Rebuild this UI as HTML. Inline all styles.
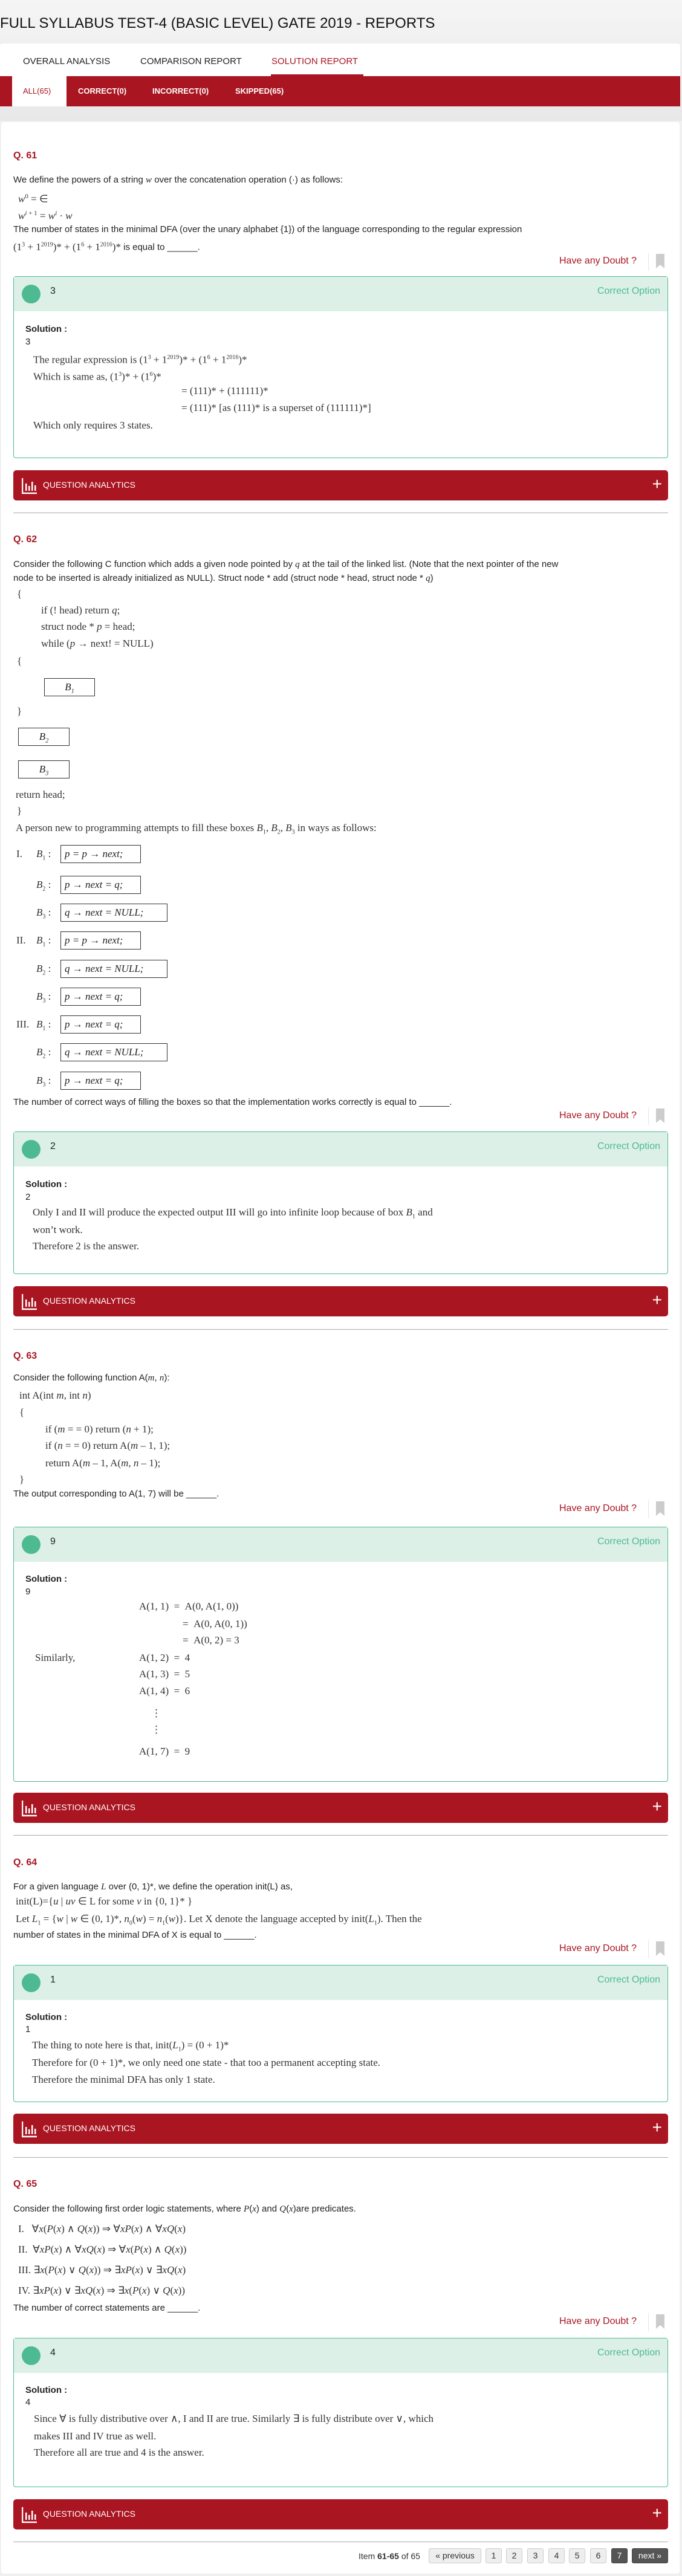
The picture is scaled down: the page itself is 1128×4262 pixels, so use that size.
<!DOCTYPE html>
<html><head><meta charset="utf-8">
<style>
*{margin:0;padding:0;box-sizing:border-box}
body{width:1128px;height:4262px;background:#f0f0f0;font-family:"Liberation Sans",sans-serif;color:#222;position:relative;overflow:hidden}
.a{position:absolute;white-space:nowrap;line-height:20px}
.q{font-size:15px;left:22px}
.m{font-family:"Liberation Serif",serif;font-size:17px;color:#333}
.qn{color:#a91521;font-size:16px;font-weight:bold;left:22px}
.doubt{left:925px;color:#a91521;font-size:16px}
.bm{position:absolute;left:1085px;width:14px;height:24px;background:#ccc;clip-path:polygon(0 0,100% 0,100% 100%,50% 75%,0 100%)}
.vl{position:absolute;left:1072px;width:1px;height:30px;background:#e5e5e5}
.box{position:absolute;left:22px;width:1083px;border:1px solid #4dba92;border-radius:4px;background:#fff}
.box .hd{height:57px;background:#dcf0e8;position:relative}
.box .cir{position:absolute;left:13px;top:13px;width:31px;height:31px;border-radius:50%;background:#4dba92}
.box .num{position:absolute;left:60px;top:15px;font-size:16px}
.box .co{position:absolute;right:12px;top:15px;font-size:16px;color:#4dba92}
.sol{font-size:15px;font-weight:bold;left:42px}
.sv{font-size:15px;left:42px}
.an{position:absolute;left:22px;width:1083px;height:50px;background:#a91521;border-radius:5px;color:#fff}
.an .t{position:absolute;left:49px;top:16px;font-size:14px}
.an .p{position:absolute;right:10px;top:8px;font-size:28px;font-weight:300;line-height:30px}
.an svg{position:absolute;left:14px;top:13px}
.hr{position:absolute;left:22px;width:1083px;height:1px;background:#aaa}
.bx{position:absolute;border:1.5px solid #333;height:30px;font-family:"Liberation Serif",serif;font-size:17px;font-style:italic;padding:3px 6px;line-height:22px}
i{font-family:"Liberation Serif",serif}
.pg{position:absolute;top:4216px;height:25px;border:1px solid #ccc;border-radius:3px;background:#eee;font-size:14px;text-align:center;line-height:23px;color:#333}
</style></head><body>
<div style="position:absolute;left:0;top:0;width:1128px;height:200px;background:linear-gradient(#f5f5f5,#e8e8e8)"></div>
<div class="a" style="left:0;top:24px;font-size:24px;line-height:30px;color:#111">FULL SYLLABUS TEST-4 (BASIC LEVEL) GATE 2019 - REPORTS</div>
<div style="position:absolute;left:0;top:72px;width:1125px;height:54px;background:#fff;border-radius:4px 4px 0 0"></div>
<div class="a" style="left:38px;top:92px;font-size:15px;color:#222">OVERALL ANALYSIS</div>
<div class="a" style="left:232px;top:92px;font-size:15px;color:#222">COMPARISON REPORT</div>
<div class="a" style="left:449px;top:92px;font-size:15px;color:#a91521">SOLUTION REPORT</div>
<div style="position:absolute;left:448px;top:123px;width:153px;height:3px;background:#a91521"></div>
<div style="position:absolute;left:0;top:126px;width:1125px;height:50px;background:#a91521"></div>
<div style="position:absolute;left:20px;top:126px;width:90px;height:50px;background:#fff"></div>
<div class="a" style="left:38px;top:141px;font-size:13px;color:#a91521">ALL(65)</div>
<div class="a" style="left:129px;top:141px;font-size:13px;color:#fff;font-weight:bold">CORRECT(0)</div>
<div class="a" style="left:252px;top:141px;font-size:13px;color:#fff;font-weight:bold">INCORRECT(0)</div>
<div class="a" style="left:389px;top:141px;font-size:13px;color:#fff;font-weight:bold">SKIPPED(65)</div>
<div style="position:absolute;left:2px;top:202px;width:1122px;height:4056px;background:#fff;border-radius:4px"></div>

<!-- Q61 -->
<div class="a qn" style="top:248px">Q. 61</div>
<div class="a q" style="top:288px">We define the powers of a string <i>w</i> over the concatenation operation (·) as follows:</div>
<div class="a m" style="left:30px;top:315px"><i>w</i><sup style="font-size:11px">0</sup> = ∈</div>
<div class="a m" style="left:30px;top:343px"><i>w</i><sup style="font-size:11px"><i>i</i> + 1</sup> = <i>w</i><sup style="font-size:11px"><i>i</i></sup> · <i>w</i></div>
<div class="a q" style="top:370px">The number of states in the minimal DFA (over the unary alphabet {1}) of the language corresponding to the regular expression</div>
<div class="a q" style="top:395px"><span class="m">(1<sup style="font-size:10px">3</sup> + 1<sup style="font-size:10px">2019</sup>)* + (1<sup style="font-size:10px">6</sup> + 1<sup style="font-size:10px">2016</sup>)*</span> is equal to ______.</div>
<div class="a doubt" style="top:422px">Have any Doubt ?</div><div class="vl" style="top:418px"></div><div class="bm" style="top:420px"></div>
<div class="box" style="top:457px;height:301px"><div class="hd"><div class="cir"></div><div class="num">3</div><div class="co">Correct Option</div></div></div>
<div class="a sol" style="top:535px">Solution :</div>
<div class="a sv" style="top:556px">3</div>
<div class="a m" style="left:55px;top:582px">The regular expression is (1<sup style="font-size:10px">3</sup> + 1<sup style="font-size:10px">2019</sup>)* + (1<sup style="font-size:10px">6</sup> + 1<sup style="font-size:10px">2016</sup>)*</div>
<div class="a m" style="left:55px;top:610px">Which is same as, (1<sup style="font-size:10px">3</sup>)* + (1<sup style="font-size:10px">6</sup>)*</div>
<div class="a m" style="left:300px;top:637px">= (111)* + (111111)*</div>
<div class="a m" style="left:300px;top:665px">= (111)* [as (111)* is a superset of (111111)*]</div>
<div class="a m" style="left:55px;top:694px">Which only requires 3 states.</div>
<div class="an" style="top:778px"><svg width="26" height="27"><path d="M1 0V25H25" stroke="#fff" stroke-width="2.5" fill="none"/><rect x="6" y="9" width="2.5" height="12" fill="#fff"/><rect x="11" y="13" width="2.5" height="8" fill="#fff"/><rect x="16" y="6" width="2.5" height="15" fill="#fff"/><rect x="21" y="12" width="2.5" height="9" fill="#fff"/></svg><div class="t">QUESTION ANALYTICS</div><div class="p">+</div></div>
<div class="hr" style="top:848px"></div>

<!-- Q62 -->
<div class="a qn" style="top:883px">Q. 62</div>
<div class="a q" style="top:924px">Consider the following C function which adds a given node pointed by <i>q</i> at the tail of the linked list. (Note that the next pointer of the new</div>
<div class="a q" style="top:947px">node to be inserted is already initialized as NULL). Struct node * add (struct node * head, struct node * <i>q</i>)</div>
<div class="a m" style="left:28px;top:973px">{</div>
<div class="a m" style="left:68px;top:1000px">if (! head) return <i>q</i>;</div>
<div class="a m" style="left:68px;top:1027px">struct node * <i>p</i> = head;</div>
<div class="a m" style="left:68px;top:1055px">while (<i>p</i> → next! = NULL)</div>
<div class="a m" style="left:28px;top:1084px">{</div>
<div class="bx" style="left:73px;top:1122px;width:84px;text-align:center">B<sub style="font-size:10px">1</sub></div>
<div class="a m" style="left:28px;top:1167px">}</div>
<div class="bx" style="left:30px;top:1204px;width:85px;text-align:center">B<sub style="font-size:10px">2</sub></div>
<div class="bx" style="left:30px;top:1258px;width:85px;text-align:center">B<sub style="font-size:10px">3</sub></div>
<div class="a m" style="left:26px;top:1305px">return head;</div>
<div class="a m" style="left:28px;top:1332px">}</div>
<div class="a m" style="left:26px;top:1360px">A person new to programming attempts to fill these boxes <i>B</i><sub style="font-size:10px">1</sub>, <i>B</i><sub style="font-size:10px">2</sub>, <i>B</i><sub style="font-size:10px">3</sub> in ways as follows:</div>
<div class="a m" style="left:27px;top:1403px">I.</div>
<div class="a m" style="left:27px;top:1546px">II.</div>
<div class="a m" style="left:27px;top:1685px">III.</div>
<div class="a m" style="left:60px;top:1403px"><i>B</i><sub style="font-size:10px">1</sub> :</div>
<div class="a m" style="left:60px;top:1454px"><i>B</i><sub style="font-size:10px">2</sub> :</div>
<div class="a m" style="left:60px;top:1500px"><i>B</i><sub style="font-size:10px">3</sub> :</div>
<div class="a m" style="left:60px;top:1546px"><i>B</i><sub style="font-size:10px">1</sub> :</div>
<div class="a m" style="left:60px;top:1593px"><i>B</i><sub style="font-size:10px">2</sub> :</div>
<div class="a m" style="left:60px;top:1639px"><i>B</i><sub style="font-size:10px">3</sub> :</div>
<div class="a m" style="left:60px;top:1685px"><i>B</i><sub style="font-size:10px">1</sub> :</div>
<div class="a m" style="left:60px;top:1731px"><i>B</i><sub style="font-size:10px">2</sub> :</div>
<div class="a m" style="left:60px;top:1778px"><i>B</i><sub style="font-size:10px">3</sub> :</div>
<div class="bx" style="left:100px;top:1398px;width:133px"><i>p</i> = <i>p</i> → next;</div>
<div class="bx" style="left:100px;top:1449px;width:133px"><i>p</i> → next = <i>q</i>;</div>
<div class="bx" style="left:100px;top:1495px;width:177px"><i>q</i> → next = NULL;</div>
<div class="bx" style="left:100px;top:1541px;width:133px"><i>p</i> = <i>p</i> → next;</div>
<div class="bx" style="left:100px;top:1588px;width:177px"><i>q</i> → next = NULL;</div>
<div class="bx" style="left:100px;top:1634px;width:133px"><i>p</i> → next = <i>q</i>;</div>
<div class="bx" style="left:100px;top:1680px;width:133px"><i>p</i> → next = <i>q</i>;</div>
<div class="bx" style="left:100px;top:1726px;width:177px"><i>q</i> → next = NULL;</div>
<div class="bx" style="left:100px;top:1773px;width:133px"><i>p</i> → next = <i>q</i>;</div>
<div class="a q" style="top:1814px">The number of correct ways of filling the boxes so that the implementation works correctly is equal to ______.</div>
<div class="a doubt" style="top:1836px">Have any Doubt ?</div><div class="vl" style="top:1832px"></div><div class="bm" style="top:1834px"></div>
<div class="box" style="top:1872px;height:236px"><div class="hd"><div class="cir"></div><div class="num">2</div><div class="co">Correct Option</div></div></div>
<div class="a sol" style="top:1950px">Solution :</div>
<div class="a sv" style="top:1971px">2</div>
<div class="a m" style="left:54px;top:1996px">Only I and II will produce the expected output III will go into infinite loop because of box <i>B</i><sub style="font-size:10px">1</sub> and</div>
<div class="a m" style="left:54px;top:2025px">won’t work.</div>
<div class="a m" style="left:54px;top:2052px">Therefore 2 is the answer.</div>
<div class="an" style="top:2128px"><svg width="26" height="27"><path d="M1 0V25H25" stroke="#fff" stroke-width="2.5" fill="none"/><rect x="6" y="9" width="2.5" height="12" fill="#fff"/><rect x="11" y="13" width="2.5" height="8" fill="#fff"/><rect x="16" y="6" width="2.5" height="15" fill="#fff"/><rect x="21" y="12" width="2.5" height="9" fill="#fff"/></svg><div class="t">QUESTION ANALYTICS</div><div class="p">+</div></div>
<div class="hr" style="top:2199px"></div>

<!-- Q63 -->
<div class="a qn" style="top:2234px">Q. 63</div>
<div class="a q" style="top:2270px">Consider the following function A(<i>m</i>, <i>n</i>):</div>
<div class="a m" style="left:32px;top:2299px">int A(int <i>m</i>, int <i>n</i>)</div>
<div class="a m" style="left:32px;top:2327px">{</div>
<div class="a m" style="left:75px;top:2355px">if (<i>m</i> = = 0) return (<i>n</i> + 1);</div>
<div class="a m" style="left:75px;top:2382px">if (<i>n</i> = = 0) return A(<i>m</i> – 1, 1);</div>
<div class="a m" style="left:75px;top:2411px">return A(<i>m</i> – 1, A(<i>m</i>, <i>n</i> – 1);</div>
<div class="a m" style="left:32px;top:2438px">}</div>
<div class="a q" style="top:2462px">The output corresponding to A(1, 7) will be ______.</div>
<div class="a doubt" style="top:2486px">Have any Doubt ?</div><div class="vl" style="top:2482px"></div><div class="bm" style="top:2484px"></div>
<div class="box" style="top:2526px;height:422px"><div class="hd"><div class="cir"></div><div class="num">9</div><div class="co">Correct Option</div></div></div>
<div class="a sol" style="top:2603px">Solution :</div>
<div class="a sv" style="top:2624px">9</div>
<div class="a m" style="left:230px;top:2648px">A(1, 1) &nbsp;= &nbsp;A(0, A(1, 0))</div>
<div class="a m" style="left:302px;top:2677px">= &nbsp;A(0, A(0, 1))</div>
<div class="a m" style="left:302px;top:2704px">= &nbsp;A(0, 2) = 3</div>
<div class="a m" style="left:58px;top:2733px">Similarly,</div>
<div class="a m" style="left:230px;top:2733px">A(1, 2) &nbsp;= &nbsp;4</div>
<div class="a m" style="left:230px;top:2760px">A(1, 3) &nbsp;= &nbsp;5</div>
<div class="a m" style="left:230px;top:2788px">A(1, 4) &nbsp;= &nbsp;6</div>
<div class="a m" style="left:250px;top:2825px">⋮</div>
<div class="a m" style="left:250px;top:2852px">⋮</div>
<div class="a m" style="left:230px;top:2888px">A(1, 7) &nbsp;= &nbsp;9</div>
<div class="an" style="top:2966px"><svg width="26" height="27"><path d="M1 0V25H25" stroke="#fff" stroke-width="2.5" fill="none"/><rect x="6" y="9" width="2.5" height="12" fill="#fff"/><rect x="11" y="13" width="2.5" height="8" fill="#fff"/><rect x="16" y="6" width="2.5" height="15" fill="#fff"/><rect x="21" y="12" width="2.5" height="9" fill="#fff"/></svg><div class="t">QUESTION ANALYTICS</div><div class="p">+</div></div>
<div class="hr" style="top:3036px"></div>

<!-- Q64 -->
<div class="a qn" style="top:3072px">Q. 64</div>
<div class="a q" style="top:3112px">For a given language <i>L</i> over (0, 1)*, we define the operation init(L) as,</div>
<div class="a m" style="left:26px;top:3136px">init(L)={<i>u</i> | <i>uv</i> ∈ L for some <i>v</i> in {0, 1}* }</div>
<div class="a m" style="left:26px;top:3165px">Let <i>L</i><sub style="font-size:10px">1</sub> = {<i>w</i> | <i>w</i> ∈ (0, 1)*, <i>n</i><sub style="font-size:10px">0</sub>(<i>w</i>) = <i>n</i><sub style="font-size:10px">1</sub>(<i>w</i>)}. Let X denote the language accepted by init(<i>L</i><sub style="font-size:10px">1</sub>). Then the</div>
<div class="a q" style="top:3192px">number of states in the minimal DFA of X is equal to ______.</div>
<div class="a doubt" style="top:3214px">Have any Doubt ?</div><div class="vl" style="top:3210px"></div><div class="bm" style="top:3212px"></div>
<div class="box" style="top:3251px;height:227px"><div class="hd"><div class="cir"></div><div class="num">1</div><div class="co">Correct Option</div></div></div>
<div class="a sol" style="top:3328px">Solution :</div>
<div class="a sv" style="top:3348px">1</div>
<div class="a m" style="left:53px;top:3374px">The thing to note here is that, init(<i>L</i><sub style="font-size:10px">1</sub>) = (0 + 1)*</div>
<div class="a m" style="left:53px;top:3403px">Therefore for (0 + 1)*, we only need one state - that too a permanent accepting state.</div>
<div class="a m" style="left:53px;top:3431px">Therefore the minimal DFA has only 1 state.</div>
<div class="an" style="top:3497px"><svg width="26" height="27"><path d="M1 0V25H25" stroke="#fff" stroke-width="2.5" fill="none"/><rect x="6" y="9" width="2.5" height="12" fill="#fff"/><rect x="11" y="13" width="2.5" height="8" fill="#fff"/><rect x="16" y="6" width="2.5" height="15" fill="#fff"/><rect x="21" y="12" width="2.5" height="9" fill="#fff"/></svg><div class="t">QUESTION ANALYTICS</div><div class="p">+</div></div>
<div class="hr" style="top:3569px"></div>

<!-- Q65 -->
<div class="a qn" style="top:3604px">Q. 65</div>
<div class="a q" style="top:3645px">Consider the following first order logic statements, where <i>P</i>(<i>x</i>) and <i>Q</i>(<i>x</i>)are predicates.</div>
<div class="a m" style="left:30px;top:3678px">I. &nbsp;&nbsp;∀<i>x</i>(<i>P</i>(<i>x</i>) ∧ <i>Q</i>(<i>x</i>)) ⇒ ∀<i>xP</i>(<i>x</i>) ∧ ∀<i>xQ</i>(<i>x</i>)</div>
<div class="a m" style="left:30px;top:3712px">II. &nbsp;∀<i>xP</i>(<i>x</i>) ∧ ∀<i>xQ</i>(<i>x</i>) ⇒ ∀<i>x</i>(<i>P</i>(<i>x</i>) ∧ <i>Q</i>(<i>x</i>))</div>
<div class="a m" style="left:30px;top:3746px">III. ∃<i>x</i>(<i>P</i>(<i>x</i>) ∨ <i>Q</i>(<i>x</i>)) ⇒ ∃<i>xP</i>(<i>x</i>) ∨ ∃<i>xQ</i>(<i>x</i>)</div>
<div class="a m" style="left:30px;top:3780px">IV. ∃<i>xP</i>(<i>x</i>) ∨ ∃<i>xQ</i>(<i>x</i>) ⇒ ∃<i>x</i>(<i>P</i>(<i>x</i>) ∨ <i>Q</i>(<i>x</i>))</div>
<div class="a q" style="top:3809px">The number of correct statements are ______.</div>
<div class="a doubt" style="top:3831px">Have any Doubt ?</div><div class="vl" style="top:3827px"></div><div class="bm" style="top:3829px"></div>
<div class="box" style="top:3868px;height:247px"><div class="hd"><div class="cir"></div><div class="num">4</div><div class="co">Correct Option</div></div></div>
<div class="a sol" style="top:3945px">Solution :</div>
<div class="a sv" style="top:3965px">4</div>
<div class="a m" style="left:56px;top:3992px">Since ∀ is fully distributive over ∧, I and II are true. Similarly ∃ is fully distribute over ∨, which</div>
<div class="a m" style="left:56px;top:4021px">makes III and IV true as well.</div>
<div class="a m" style="left:56px;top:4048px">Therefore all are true and 4 is the answer.</div>
<div class="an" style="top:4135px"><svg width="26" height="27"><path d="M1 0V25H25" stroke="#fff" stroke-width="2.5" fill="none"/><rect x="6" y="9" width="2.5" height="12" fill="#fff"/><rect x="11" y="13" width="2.5" height="8" fill="#fff"/><rect x="16" y="6" width="2.5" height="15" fill="#fff"/><rect x="21" y="12" width="2.5" height="9" fill="#fff"/></svg><div class="t">QUESTION ANALYTICS</div><div class="p">+</div></div>
<div class="hr" style="top:4205px"></div>

<div class="a" style="left:593px;top:4219px;font-size:14px;color:#333">Item <b>61-65</b> of 65</div>
<div class="pg" style="left:709px;width:87px">« previous</div>
<div class="pg" style="left:803px;width:27px">1</div>
<div class="pg" style="left:837px;width:27px">2</div>
<div class="pg" style="left:872px;width:27px">3</div>
<div class="pg" style="left:907px;width:27px">4</div>
<div class="pg" style="left:941px;width:27px">5</div>
<div class="pg" style="left:976px;width:27px">6</div>
<div class="pg" style="left:1011px;width:27px;background:#555;border-color:#444;color:#fff">7</div>
<div class="pg" style="left:1045px;width:60px;background:#555;border-color:#444;color:#fff">next »</div>
</body></html>
